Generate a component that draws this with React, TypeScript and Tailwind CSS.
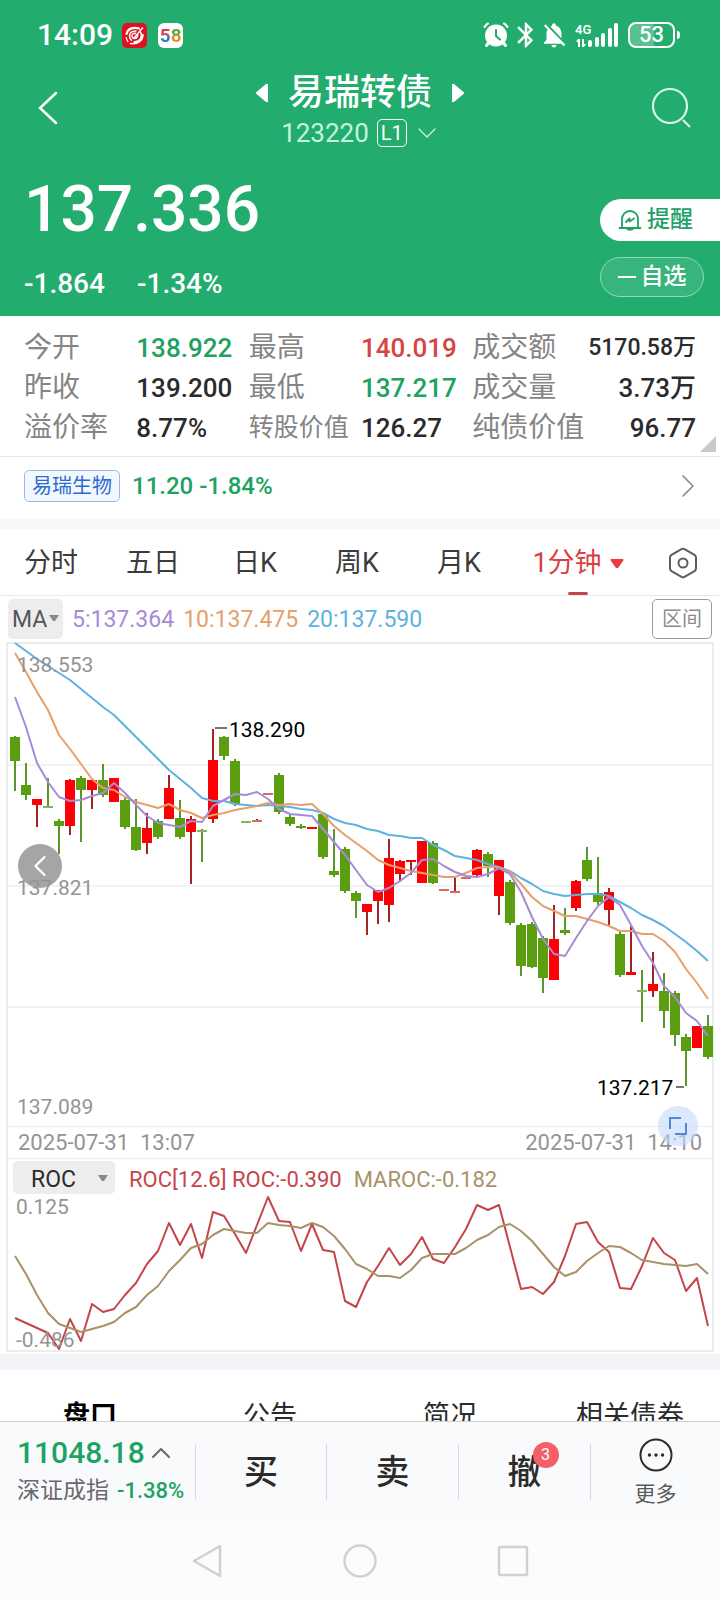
import React from 'react';
import { ChevronDown, ChevronLeft, ChevronRight, ChevronUp } from 'lucide-react';
import { MdBluetooth, MdNotificationsOff } from 'react-icons/md';

type Tone = 'up' | 'down' | 'flat';

// [direction, high, body top, body bottom, low]
type Candle = [1 | 0, number, number, number, number];

const STEP = 11;
const START = 15;

const candles: Candle[] = [
  [0, 736, 737, 761, 791], [0, 763, 785, 795, 800], [1, 799, 799, 805, 827], [0, 778, 807, 807, 807],
  [0, 819, 821, 826, 854], [1, 779, 780, 826, 835], [0, 776, 778, 790, 842], [1, 780, 780, 790, 809],
  [0, 764, 780, 795, 797], [1, 778, 778, 802, 802], [0, 798, 800, 827, 829], [0, 799, 827, 850, 851],
  [1, 813, 828, 843, 854], [0, 819, 821, 837, 839], [1, 775, 788, 819, 819], [0, 800, 818, 837, 839],
  [1, 816, 819, 832, 884], [0, 829, 831, 831, 862], [1, 729, 760, 819, 823], [0, 736, 737, 756, 760],
  [0, 759, 761, 804, 806], [0, 822, 822, 822, 822], [1, 819, 821, 821, 822], [1, 794, 794, 794, 794],
  [0, 773, 775, 812, 814], [0, 815, 817, 824, 826], [0, 824, 826, 827, 829], [1, 827, 827, 829, 829],
  [0, 812, 814, 857, 859], [0, 829, 871, 875, 877], [0, 847, 849, 891, 893], [0, 891, 893, 901, 918],
  [1, 904, 904, 912, 935], [1, 890, 890, 901, 924], [1, 839, 858, 905, 922], [1, 860, 861, 874, 882],
  [1, 860, 860, 861, 875], [1, 841, 841, 883, 883], [0, 841, 843, 883, 884], [1, 890, 890, 890, 890],
  [1, 877, 892, 892, 892], [1, 878, 878, 878, 878], [1, 849, 850, 875, 876], [0, 852, 854, 866, 877],
  [1, 860, 860, 896, 915], [0, 880, 882, 923, 925], [0, 923, 925, 966, 976], [0, 922, 924, 967, 968],
  [0, 936, 938, 978, 993], [1, 905, 939, 980, 980], [0, 908, 930, 933, 935], [1, 880, 881, 908, 911],
  [0, 847, 860, 879, 881], [0, 857, 893, 902, 905], [1, 888, 892, 910, 926], [0, 932, 934, 975, 977],
  [1, 926, 972, 975, 975], [0, 970, 991, 991, 1022], [1, 952, 984, 991, 997], [0, 973, 991, 1011, 1028],
  [0, 991, 993, 1035, 1046], [0, 1034, 1037, 1051, 1086], [1, 1026, 1026, 1048, 1048], [0, 1015, 1026, 1057, 1059],
];

const ma5 = [
  697, 727, 763, 782, 797, 801, 800, 796, 793, 783, 793, 805, 816, 823, 825, 827, 821, 822, 806, 800, 794, 795,
  792, 799, 809, 814, 815, 816, 829, 842, 855, 870, 885, 892, 888, 881, 873, 860, 859, 866, 872, 876, 877, 874,
  868, 874, 892, 917, 939, 954, 956, 938, 921, 906, 897, 905, 925, 946, 963, 986, 997, 1013, 1021, 1036,
];

const ma10 = [
  653, 672, 692, 710, 735, 749, 764, 779, 788, 790, 797, 802, 805, 808, 804, 810, 813, 818, 815, 813, 810, 808,
  806, 803, 805, 804, 805, 804, 814, 826, 835, 843, 851, 860, 865, 868, 871, 873, 875, 877, 877, 873, 868, 867,
  867, 872, 884, 897, 906, 911, 916, 916, 919, 922, 926, 931, 931, 934, 934, 941, 952, 969, 983, 999,
];

const ma20 = [
  643, 651, 659, 666, 673, 680, 689, 698, 707, 715, 726, 737, 748, 759, 770, 779, 788, 798, 801, 801, 804, 805,
  806, 805, 806, 807, 809, 810, 813, 819, 823, 825, 829, 831, 835, 836, 838, 838, 845, 850, 856, 858, 860, 864,
  867, 871, 878, 884, 891, 894, 896, 895, 894, 894, 896, 902, 908, 915, 920, 926, 934, 942, 951, 961,
];

const roc = [
  1318, 1323, 1328, 1333, 1349, 1319, 1341, 1304, 1312, 1309, 1295, 1283, 1264, 1251, 1223, 1245, 1224, 1258,
  1212, 1216, 1234, 1253, 1225, 1197, 1221, 1222, 1251, 1224, 1250, 1252, 1301, 1307, 1282, 1266, 1248, 1265,
  1254, 1237, 1259, 1263, 1247, 1229, 1205, 1210, 1205, 1247, 1289, 1287, 1294, 1282, 1256, 1224, 1222, 1242,
  1252, 1288, 1289, 1266, 1238, 1253, 1260, 1291, 1278, 1326,
];

const maroc = [
  1256, 1274, 1295, 1313, 1324, 1328, 1332, 1329, 1326, 1322, 1313, 1307, 1295, 1286, 1271, 1260, 1248, 1244,
  1235, 1229, 1231, 1233, 1233, 1223, 1225, 1226, 1228, 1223, 1227, 1236, 1249, 1264, 1269, 1276, 1276, 1278,
  1270, 1258, 1254, 1254, 1254, 1248, 1240, 1235, 1227, 1224, 1231, 1241, 1254, 1267, 1276, 1272, 1261, 1253,
  1246, 1247, 1253, 1260, 1262, 1264, 1265, 1266, 1264, 1274,
];

const toPoints = (values: number[]) => values.map((y, i) => `${START + i * STEP},${y}`).join(' ');

const stats: { label: string; value: string; tone: Tone; size?: string; labelSize?: string }[] = [
  { label: '今开', value: '138.922', tone: 'down' },
  { label: '最高', value: '140.019', tone: 'up' },
  { label: '成交额', value: '5170.58万', tone: 'flat', size: 'text-[23px]' },
  { label: '昨收', value: '139.200', tone: 'flat' },
  { label: '最低', value: '137.217', tone: 'down' },
  { label: '成交量', value: '3.73万', tone: 'flat' },
  { label: '溢价率', value: '8.77%', tone: 'flat' },
  { label: '转股价值', value: '126.27', tone: 'flat', labelSize: 'text-[25px]' },
  { label: '纯债价值', value: '96.77', tone: 'flat' },
];

const toneClass: Record<Tone, string> = {
  up: 'text-[#d6453f]',
  down: 'text-[#1ca261]',
  flat: 'text-[#2b2b2b]',
};

const StatusBar: React.FC = () => (
  <div className="flex h-[70px] items-center justify-between pr-10 pl-[37px]">
    <div className="flex items-center gap-[9px]">
      <span className="text-[30px] leading-none font-medium">14:09</span>
      <svg viewBox="0 0 25 25" className="size-[25px]" fill="none" stroke="white">
        <rect width="25" height="25" rx="5" fill="#e01020" stroke="none" />
        <path d="M17 5.500C11 3.500 5.500 6 4.500 11" strokeWidth="2.200" strokeLinecap="round" />
        <path d="M14.500 8c-5-.5-7 2.500-7 5 0 2 .8 3.600 2.300 4.600" strokeWidth="1.500" />
        <path d="M21 4.500l-9.500 11M14 10.500c-2.500-.8-4.200 1-4 3 .3 2.500 3.600 2.700 5 .8 1-1.300 1-2.800.4-3.800" strokeWidth="1.500" />
        <path d="M18.500 9c2.500 4.500 0 9.500-6.500 10M21 11.500c0 6-5 10-12.500 9" strokeWidth="1.500" strokeLinecap="round" />
        <path d="M4.200 14c.1 1.800.8 3.600 2 5" strokeWidth="1.200" />
      </svg>
      <span className="ml-[2px] flex size-[25px] items-center justify-center rounded-[6px] bg-white text-[19px] leading-none font-bold">
        <span className="bg-gradient-to-b from-[#d8434a] from-45% to-[#2d7fc4] to-55% bg-clip-text text-transparent">5</span>
        <span className="bg-gradient-to-b from-[#5fa832] from-45% to-[#f08a1d] to-55% bg-clip-text text-transparent">8</span>
      </span>
    </div>

    <div className="flex items-center">
      <svg viewBox="0 0 26 26" className="h-[26px] w-[26px]" fill="none" strokeLinecap="round">
        <circle cx="13" cy="13.500" r="11" fill="white" />
        <path d="M1.500 5Q3 2.500 5 1.500M24.500 5Q23 2.500 21 1.500" stroke="white" strokeWidth="2" />
        <path d="M5 21.500l-1.500 2M21 21.500l1.500 2" stroke="white" strokeWidth="3" />
        <path d="M13 8v6l4 3.500" stroke="#22ac6e" strokeWidth="2" />
      </svg>
      <MdBluetooth className="ml-[2px] size-[30px]" />
      <MdNotificationsOff className="-ml-[2px] size-[30px]" />
      <svg viewBox="0 0 44 26" className="ml-[6px] h-[26px] w-11" fill="white">
        <text x="0" y="12" fontSize="13" fontWeight="600">4G</text>
        <path d="M3 17h2v8H3zM1 19.500l2-2.500v3zM7 17h2v8H7zM9 25l2-3H9z" />
        <rect x="13" y="18" width="4" height="7" rx="2" />
        <rect x="20" y="15" width="4" height="10" rx="2" />
        <rect x="26" y="11" width="4" height="14" rx="2" />
        <rect x="33" y="6" width="4" height="19" rx="2" />
        <rect x="39" y="1" width="4" height="24" rx="2" />
      </svg>
      <div className="ml-[9px] flex h-[26px] w-[47px] items-center justify-center rounded-[8px] border-2 border-white bg-gradient-to-r from-white/25 from-55% to-transparent to-55% text-[22px] leading-none font-medium">
        53
      </div>
      <div className="ml-[2px] h-2 w-[3px] rounded-r bg-white" />
    </div>
  </div>
);

const Header: React.FC = () => (
  <header className="bg-[#22ac6e] text-white">
    <StatusBar />
    <div className="flex h-20 items-start justify-between pr-7 pl-9">
      <button aria-label="返回" className="pt-[21px]">
        <svg viewBox="0 0 24 34" className="h-[34px] w-6" fill="none" stroke="white" strokeWidth="2.500">
          <path d="M20 2L4 17l16 15" strokeLinecap="round" />
        </svg>
      </button>
      <div className="flex flex-col items-center pt-px pl-2">
        <div className="flex items-center gap-5">
          <button aria-label="上一只">
            <svg viewBox="0 0 12 18" className="h-[18px] w-3" fill="white"><path d="M12 0v18h-2L0 9.500v-1L10 0z" /></svg>
          </button>
          <h1 className="text-[36px] leading-[44px] font-medium">易瑞转债</h1>
          <button aria-label="下一只">
            <svg viewBox="0 0 12 18" className="h-[18px] w-3" fill="white"><path d="M0 0v18h2l10-8.500v-1L2 0z" /></svg>
          </button>
        </div>
        <button className="flex items-center gap-2 leading-9 text-[#c4f5dd]">
          <span className="text-[26px]">123220</span>
          <span className="flex h-7 w-[30px] items-center justify-center rounded-[5px] border border-white text-[20px] text-white">L1</span>
          <ChevronDown className="-mr-1 -ml-1 size-8" strokeWidth={1} />
        </button>
      </div>
      <button aria-label="搜索" className="pt-[17px]">
        <svg viewBox="0 0 40 42" className="h-[42px] w-10" fill="none" stroke="#d5f8e7" strokeWidth="2.200">
          <circle cx="18" cy="19" r="17" />
          <path d="M31 33l7 7" />
        </svg>
      </button>
    </div>

    <div className="flex h-[166px] items-start justify-between pl-6">
      <div>
        <div className="mt-5 text-[64px] leading-20 font-medium">137.336</div>
        <div className="mt-[14px] flex gap-8 text-[28px] leading-10 font-medium">
          <span>-1.864</span>
          <span>-1.34%</span>
        </div>
      </div>
      <div className="mt-[49px] flex flex-col gap-4 text-[23px] font-medium">
        <button className="flex h-[42px] w-[120px] items-center gap-[5px] rounded-l-full bg-white pl-[18px] text-[#22a068]">
          <svg viewBox="0 0 24 24" className="h-6 w-6" fill="none" stroke="currentColor" strokeWidth="1.800" strokeLinecap="round" strokeLinejoin="round">
            <path d="M4 19V11a8 8 0 0 1 16 0v8M1.500 20h21M8.500 20.500a4 2.500 0 0 0 7 0" />
            <path d="M8 14l3.500-3.500v3L16 10.500" />
          </svg>
          提醒
        </button>
        <button className="flex h-10 w-[104px] items-center justify-center gap-[5px] rounded-full border border-[#8fd8b5] bg-white/10">
          <span className="h-[2px] w-[18px] bg-white" />
          自选
        </button>
      </div>
    </div>
  </header>
);

const Quotes: React.FC = () => (
  <section className="relative border-b border-[#e9e9e9] px-6 pt-3 pb-2">
    <dl className="grid grid-cols-[112fr_112fr_112fr_111fr_113fr_110fr] text-[26px] leading-10 whitespace-nowrap">
      {stats.map((s, i) => (
        <React.Fragment key={s.label}>
          <dt className={`text-[#858585] ${s.labelSize ?? 'text-[28px]'}`}>{s.label}</dt>
          <dd className={`font-medium ${toneClass[s.tone]} ${s.size ?? ''} ${i % 3 === 2 ? 'justify-self-end' : ''}`}>
            {s.value}
          </dd>
        </React.Fragment>
      ))}
    </dl>
    <svg viewBox="0 0 16 16" className="absolute right-1 bottom-1 size-4" fill="#c9c9c9">
      <path d="M16 0v16H0z" />
    </svg>
  </section>
);

const periods = ['分时', '五日', '日K', '周K', '月K'];

const PeriodTabs: React.FC = () => (
  <nav className="grid h-[67px] grid-cols-[102fr_102fr_102fr_102fr_102fr_136fr_74fr] border-b border-[#e9e9e9] pt-[2px] text-[27px] whitespace-nowrap text-[#3c3c3c]">
    {periods.map((p) => (
      <button key={p}>{p}</button>
    ))}
    <button className="relative flex items-center justify-center gap-2 text-[#d93f45]">
      1分钟
      <svg viewBox="0 0 14 9" className="h-[9px] w-[14px]" fill="#ee3b43"><path d="M1 0h12q1 1 0 2L8 9H6L1 2Q0 1 1 0z" /></svg>
      <span className="absolute bottom-0 left-1/2 h-[3px] w-5 -translate-x-1/2 rounded bg-[#c9434c]" />
    </button>
    <button aria-label="设置" className="flex items-center justify-center">
      <svg viewBox="0 0 30 32" className="h-8 w-[30px]" fill="none" stroke="#5d5d5d" strokeWidth="2" strokeLinejoin="round">
        <path d="M13.500 2.200q1.500-.8 3 0l10 5.600q1.500 1 1.500 2.600v11.200q0 1.600-1.500 2.600l-10 5.600q-1.500.8-3 0l-10-5.600Q2 23.200 2 21.600V10.400Q2 8.800 3.500 7.800z" />
        <circle cx="15" cy="16" r="4.500" />
      </svg>
    </button>
  </nav>
);

const Caret: React.FC<{ className: string }> = ({ className }) => (
  <svg viewBox="0 0 10 6" className={`pointer-events-none absolute h-[6px] w-[10px] ${className}`} fill="#8a8a8a">
    <path d="M0 0h10L6 6H4z" />
  </svg>
);

const KLine: React.FC = () => (
  <div className="relative">
    <svg viewBox="0 641 720 485" className="block h-auto w-full" fontSize="21">
      <g stroke="#ececec" strokeWidth="2" fill="none">
        <path d="M7 1126V643h706v483" />
        <path d="M8 765h704M8 886h704M8 1007h704" stroke="#f2f2f2" />
      </g>
      {candles.map(([up, high, top, bottom, low], i) => {
        const x = START + i * STEP;
        const doji = bottom - top < 1;
        return (
          <g key={i}>
            {low > high && <path d={`M${x} ${high}V${low}`} stroke={up ? '#a32222' : '#5a962b'} strokeWidth="2" />}
            {doji ? (
              <path d={`M${x - 5} ${top}h10`} stroke={up ? '#d96a6a' : '#83b35e'} strokeWidth="2" />
            ) : (
              <rect x={x - 5} y={top} width="10" height={Math.max(bottom - top, 2)} fill={up ? '#fb0106' : '#5b9e10'} />
            )}
          </g>
        );
      })}
      <g fill="none" strokeWidth="2" strokeLinejoin="round">
        <polyline points={toPoints(ma20)} stroke="#5fb2e0" />
        <polyline points={toPoints(ma10)} stroke="#e5a06c" />
        <polyline points={toPoints(ma5)} stroke="#a68bd8" />
      </g>
      <path d="M215 728h12M676 1087h8" stroke="#777" strokeWidth="2" />
      <text x="229" y="737" fill="#000">138.290</text>
      <text x="597" y="1095" fill="#000">137.217</text>
    </svg>
    <button aria-label="向左" className="absolute top-[203px] left-[18px] flex size-11 items-center justify-center rounded-full bg-[#a5a5a5] text-white">
      <ChevronLeft className="size-9" strokeWidth={1.5} />
    </button>
    <div className="pointer-events-none absolute inset-0 text-[21px] leading-6 text-[#949494]">
      <span className="absolute top-3 left-[17px]">138.553</span>
      <span className="absolute top-[235px] left-[17px]">137.821</span>
      <span className="absolute bottom-[7px] left-[17px]">137.089</span>
    </div>
    <button aria-label="全屏" className="absolute right-[22px] -bottom-5 flex size-10 items-center justify-center rounded-full bg-[#c5d9fb]/60">
      <svg viewBox="0 0 18 18" className="size-[18px]" fill="none" stroke="#5088d8" strokeWidth="2">
        <path d="M1 12V1h11M17 6v11H6" />
      </svg>
    </button>
  </div>
);

const RocChart: React.FC = () => (
  <svg viewBox="0 1196 720 158" className="block h-auto w-full overflow-visible" fontSize="21">
    <path d="M7 1196v155h706v-155" stroke="#ececec" strokeWidth="2" fill="none" />
    <text x="16" y="1214" fill="#949494">0.125</text>
    <g fill="none" strokeWidth="2" strokeLinejoin="round">
      <polyline points={toPoints(roc)} stroke="#c4454a" />
      <polyline points={toPoints(maroc)} stroke="#a99168" />
    </g>
    <text x="16" y="1347" fill="#949494">-0.486</text>
  </svg>
);

const tradeButton = 'border-l border-[#d8d8dc] text-[34px] leading-[56px] font-medium text-[#2b2b2b]';

const BottomBar: React.FC = () => (
  <footer>
    <div className="grid h-[101px] grid-cols-[195fr_131fr_132fr_132fr_130fr] grid-rows-[56px] border-t border-[#cfcfd2] bg-[#f9fafc] pt-[22px]">
      <button className="-mt-3 flex flex-col items-start pl-[17px] whitespace-nowrap">
        <span className="flex items-center text-[30px] leading-[42px] font-medium text-[#1ca261]">
          11048.18
          <ChevronUp className="size-8 text-[#666]" strokeWidth={1.5} />
        </span>
        <span className="flex gap-2 text-[23px] leading-[34px] text-[#68686e]">
          深证成指
          <span className="text-[22px] font-medium text-[#1ca261]">-1.38%</span>
        </span>
      </button>
      <button className={tradeButton}>买</button>
      <button className={tradeButton}>卖</button>
      <button className={tradeButton}>
        <span className="relative">
          撤
          <span className="absolute -top-[10px] -right-[17px] flex size-[26px] items-center justify-center rounded-full bg-[#f55f69] text-[16px] leading-none font-normal text-white">3</span>
        </span>
      </button>
      <button className="flex flex-col items-center border-l border-[#d8d8dc] text-[21px] leading-8 text-[#5a5a5a]">
        <svg viewBox="0 0 34 34" className="-mt-[6px] size-[34px] shrink-0" fill="#2b2b2b">
          <circle cx="17" cy="17" r="15.500" fill="none" stroke="#2b2b2b" strokeWidth="2" />
          <circle cx="10.500" cy="17" r="1.700" />
          <circle cx="17" cy="17" r="1.700" />
          <circle cx="23.500" cy="17" r="1.700" />
        </svg>
        <span className="mt-[6px]">更多</span>
      </button>
    </div>
    <div className="flex h-[78px] items-center justify-center gap-[119px] bg-[#fcfcfc]">
      <button aria-label="系统返回">
        <svg viewBox="0 0 34 34" className="size-[34px]" fill="none" stroke="#d0d0d0" strokeWidth="2.500" strokeLinejoin="round">
          <path d="M30 2v30L4 17z" />
        </svg>
      </button>
      <button aria-label="主屏幕">
        <svg viewBox="0 0 34 34" className="size-[34px]" fill="none" stroke="#d0d0d0" strokeWidth="2.500">
          <circle cx="17" cy="17" r="15.500" />
        </svg>
      </button>
      <button aria-label="最近任务">
        <svg viewBox="0 0 34 34" className="size-[34px]" fill="none" stroke="#d0d0d0" strokeWidth="2.500">
          <rect x="3" y="3" width="28" height="28" rx="1.500" />
        </svg>
      </button>
    </div>
  </footer>
);

export default function App() {
  return (
    <div className="min-h-screen bg-white font-['Roboto','Noto_Sans_CJK_SC',sans-serif]">
      <Header />
      <Quotes />

      <a href="#stock" className="flex h-[62px] items-center justify-between pr-5 pl-6 pb-1">
        <span className="flex items-center gap-3">
          <span className="flex h-8 items-center rounded-[5px] border border-[#9db9e6] bg-[#f3f8ff] px-[7px] text-[20px] text-[#2d6bd0]">易瑞生物</span>
          <span className="text-[24px] font-medium text-[#1ca261]">11.20 -1.84%</span>
        </span>
        <ChevronRight className="-mr-2 size-10 text-[#8a8a8a]" strokeWidth={1} />
      </a>
      <div className="h-[10px] bg-[#f7f7f7]" />

      <PeriodTabs />
      <div className="flex h-[45px] items-center justify-between px-2 text-[23px]">
        <div className="flex items-center gap-[9px] whitespace-nowrap">
          <label className="relative">
            <select aria-label="主图指标" className="block h-10 w-[55px] appearance-none rounded-[5px] bg-[#ededed] pt-1 pl-1 text-[#555]">
              <option>MA</option>
            </select>
            <Caret className="top-4 right-1" />
          </label>
          <span className="pt-1 text-[#a68bd8]">5:137.364</span>
          <span className="pt-1 text-[#e5a06c]">10:137.475</span>
          <span className="pt-1 text-[#5fb2e0]">20:137.590</span>
        </div>
        <button className="h-10 w-[60px] rounded-[5px] border border-[#9a9a9a] text-[20px] text-[#8c8c8c]">区间</button>
      </div>

      <KLine />
      <div className="mx-[6px] flex h-[33px] items-center justify-between border-x-2 border-y border-[#ececec] px-[10px] text-[22px] whitespace-pre text-[#949494]">
        <span>2025-07-31  13:07</span>
        <span>2025-07-31  14:10</span>
      </div>
      <div className="mx-[6px] flex h-[37px] items-center border-x-2 border-[#ececec] pl-[5px] text-[22px] whitespace-nowrap">
        <label className="relative mr-[14px]">
          <select aria-label="副图指标" className="block h-[33px] w-[102px] appearance-none rounded-[5px] bg-[#ededed] pt-[2px] pl-[18px] text-[23px] text-[#2b2b2b]">
            <option>ROC</option>
          </select>
          <Caret className="top-[14px] right-[7px]" />
        </label>
        <span className="pt-1 text-[#c4454a]">ROC[12.6] ROC:-0.390</span>
        <span className="ml-3 pt-1 text-[#a99168]">MAROC:-0.182</span>
      </div>
      <RocChart />
      <div className="h-4 bg-[#f2f4f8]" />

      <nav className="grid h-[51px] grid-cols-4 overflow-hidden pt-[26px] text-[27px] leading-10 text-[#2b2b2b]">
        <button className="font-bold text-black">盘口</button>
        <button>公告</button>
        <button>简况</button>
        <button>相关债券</button>
      </nav>
      <BottomBar />
    </div>
  );
}
